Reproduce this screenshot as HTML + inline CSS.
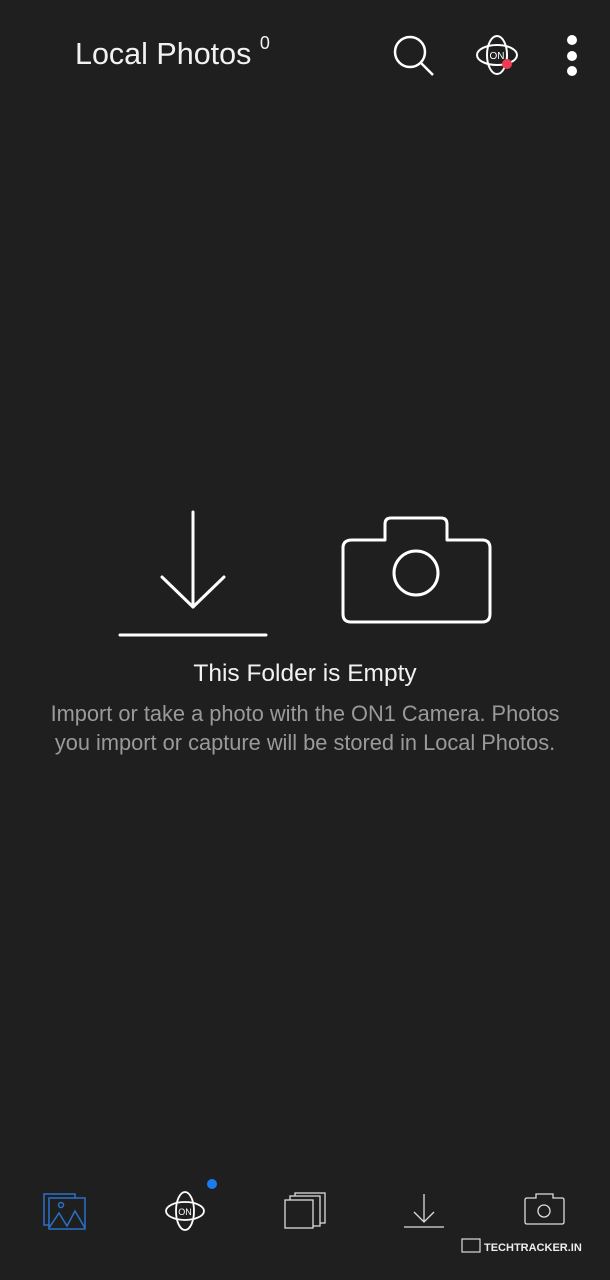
<!DOCTYPE html>
<html><head><meta charset="utf-8"><style>
html,body{margin:0;padding:0;background:#1f1f1f;width:610px;height:1280px;overflow:hidden;font-family:"Liberation Sans",sans-serif;color:#fff}
.abs{position:absolute}
</style></head><body>
<div class="abs" style="left:75px;top:37px;font-size:30.5px;color:#f2f2f2;white-space:nowrap">Local Photos <sup style="font-size:18px;position:relative;top:-4px">0</sup></div>
<svg class="abs" style="left:385px;top:28px" width="225" height="56" viewBox="385 28 225 56">
<circle cx="410" cy="52" r="15" fill="none" stroke="#fff" stroke-width="2.5"/>
<line x1="421" y1="63" x2="433" y2="75" stroke="#fff" stroke-width="2.5"/>
<ellipse cx="497" cy="55" rx="20" ry="10" fill="none" stroke="#fff" stroke-width="2"/>
<ellipse cx="497" cy="55" rx="10" ry="19" fill="none" stroke="#fff" stroke-width="2"/>
<text x="497" y="59" font-size="10" fill="#fff" text-anchor="middle" font-family="Liberation Sans">ON</text>
<circle cx="507" cy="64" r="5" fill="#f23a55"/>
<circle cx="572" cy="40" r="5" fill="#fff"/><circle cx="572" cy="56" r="5" fill="#fff"/><circle cx="572" cy="71" r="5" fill="#fff"/>
</svg>
<svg class="abs" style="left:0;top:500px" width="610" height="150" viewBox="0 500 610 150">
<g fill="none" stroke="#fff" stroke-width="3" stroke-linecap="round" stroke-linejoin="round">
<line x1="193" y1="512" x2="193" y2="607"/>
<polyline points="162,577 193,607 224,577"/>
<line x1="120" y1="635" x2="266" y2="635"/>
<path d="M352 540 H385 V524 Q385 518 391 518 H441 Q447 518 447 524 V540 H482 Q490 540 490 548 V614 Q490 622 482 622 H351 Q343 622 343 614 V548 Q343 540 352 540 Z"/>
<circle cx="416" cy="573" r="22"/>
</g></svg>
<div class="abs" style="left:0;width:610px;top:660px;text-align:center;font-size:24.5px;color:#f2f2f2">This Folder is Empty</div>
<div class="abs" style="left:0;width:610px;top:699px;text-align:center;font-size:21.8px;line-height:29px;color:#9a9a9a;white-space:nowrap">Import or take a photo with the ON1 Camera. Photos<br>you import or capture will be stored in Local Photos.</div>
<svg class="abs" style="left:0;top:1170px" width="610" height="110" viewBox="0 1170 610 110">
<g fill="none" stroke="#2a72c8" stroke-width="1.5">
<rect x="44" y="1194" width="31" height="31"/><rect x="49" y="1198" width="36" height="31" fill="#1f1f1f"/>
<circle cx="61" cy="1205" r="2.5"/><polyline points="49,1228 59,1213 67,1226 75,1211 85,1228"/>
</g>
<g fill="none" stroke="#fff" stroke-width="1.8">
<ellipse cx="185" cy="1211" rx="19" ry="9"/><ellipse cx="185" cy="1211" rx="9" ry="19"/>
</g>
<text x="185" y="1215" font-size="9" fill="#fff" text-anchor="middle">ON</text>
<circle cx="212" cy="1184" r="5" fill="#1a7cf0"/>
<g fill="none" stroke="#ddd" stroke-width="1.3">
<rect x="295" y="1193" width="30" height="30"/><rect x="290" y="1196" width="30" height="30" fill="#1f1f1f"/><rect x="285" y="1200" width="28" height="28" fill="#1f1f1f"/>
<line x1="424" y1="1194" x2="424" y2="1222"/><polyline points="414,1212 424,1222 434,1212"/><line x1="404" y1="1227" x2="444" y2="1227"/>
<path d="M527 1198 H536 V1194 H553 V1198 H562 Q564 1198 564 1200 V1222 Q564 1224 562 1224 H527 Q525 1224 525 1222 V1200 Q525 1198 527 1198 Z"/>
<circle cx="544" cy="1211" r="6"/>
</g>
<rect x="462" y="1239" width="18" height="13" fill="none" stroke="#ddd" stroke-width="1.2"/>
<text x="484" y="1251" font-size="11" fill="#eee" font-weight="bold">TECHTRACKER.IN</text>
</svg>
</body></html>
